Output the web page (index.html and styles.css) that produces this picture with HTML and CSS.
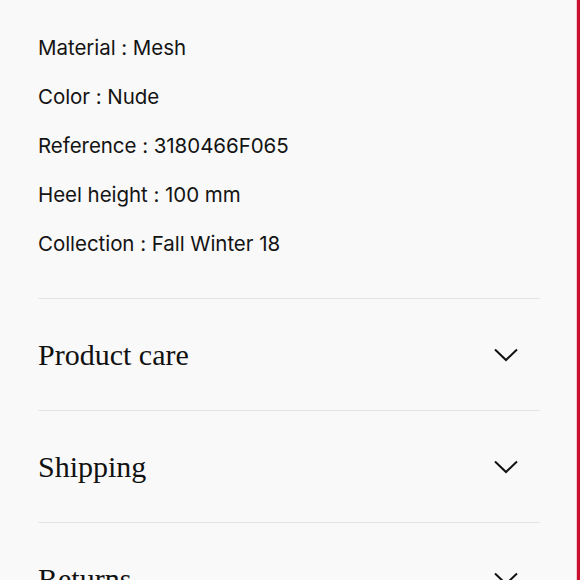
FILE: index.html
```html
<!DOCTYPE html>
<html lang="en">
<head>
<meta charset="utf-8">
<link rel="stylesheet" href="styles.css">
</head>
<body>
<div class="page">
  <main class="content">
    <ul class="specs">
      <li>Material : Mesh</li>
      <li>Color : Nude</li>
      <li>Reference : 3180466F065</li>
      <li>Heel height : 100 mm</li>
      <li>Collection : Fall Winter 18</li>
    </ul>
    <section class="accordion">
      <div class="acc-row">
        <h2 class="acc-title">Product care</h2>
        <svg class="chev" width="24" height="14" viewBox="0 0 24 14"><path d="M1 1.5 L12 12 L23 1.5" fill="none" stroke="#111" stroke-width="2"/></svg>
      </div>
      <div class="acc-row">
        <h2 class="acc-title">Shipping</h2>
        <svg class="chev" width="24" height="14" viewBox="0 0 24 14"><path d="M1 1.5 L12 12 L23 1.5" fill="none" stroke="#111" stroke-width="2"/></svg>
      </div>
      <div class="acc-row">
        <h2 class="acc-title">Returns</h2>
        <svg class="chev" width="24" height="14" viewBox="0 0 24 14"><path d="M1 1.5 L12 12 L23 1.5" fill="none" stroke="#111" stroke-width="2"/></svg>
      </div>
    </section>
  </main>
  <div class="edge"></div>
</div>
</body>
</html>
```
FILE: styles.css
```css
html, body {
  margin: 0;
  padding: 0;
  height: 100%;
  overflow: hidden;
  background: #f9f9f9;
}
.page {
  display: flex;
  height: 580px;
}
.content {
  flex: 1;
  padding: 23px 36px 0 38px;
  color: #141414;
}
.edge {
  width: 3px;
  border-left: 1px solid #f1c9cf;
  background: #c8102e;
}
.specs {
  list-style: none;
  margin: 0;
  padding: 0 0 30px;
  font-family: Inter, "Liberation Sans", sans-serif;
  font-size: 20.5px;
  line-height: 49px;
  letter-spacing: -0.05px;
}
.accordion {
  display: flex;
  flex-direction: column;
}
.acc-row {
  display: flex;
  align-items: center;
  justify-content: space-between;
  height: 111px;
  border-top: 1px solid #e4e4e4;
  padding-right: 22px;
}
.acc-title {
  margin: 0;
  font-family: "Liberation Serif", "Times New Roman", serif;
  font-weight: normal;
  font-size: 30px;
  color: #111;
}
.chev {
  display: block;
}
```
